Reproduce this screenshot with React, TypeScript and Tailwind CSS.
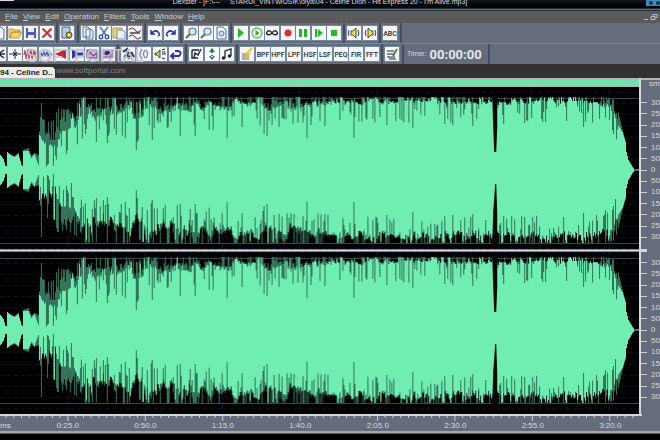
import type { ReactNode } from "react";
import { clsx } from "clsx";

type Tool = { name: string; icon: ReactNode };
type ToolGroup = { width: string; tools: Tool[] };

const ink = "#222831";
const navy = "#2a2fae";
const green = "#27b52b";

const page = <path d="M3 1h6l3 3v9H3z" fill="#eef4fc" stroke="#4f6c96" />;

const magnifier = (
  <>
    <path d="M2 12l4-4" stroke="#8a6a4a" strokeWidth="2.4" />
    <circle cx="8.5" cy="5.5" r="3.5" fill="#cfe8f6" stroke="#56799c" strokeWidth="1.2" />
  </>
);

const label = (text: string) => (
  <text x="7" y="10" textAnchor="middle" fill={ink} className="font-['Roboto',sans-serif] text-[7px] font-medium">
    {text}
  </text>
);

const speaker = (
  <>
    <path d="M4 5h2l3-3v10L6 9H4z" fill="#f0dc3a" stroke={ink} strokeWidth=".8" />
    <path d="M2 4q-1.500 3 0 6M11 4q1.500 3 0 6" stroke={navy} fill="none" />
  </>
);

const fileTools: ToolGroup[] = [
  {
    width: "w-[68px] -ml-[10px]",
    tools: [
      { name: "New", icon: page },
      {
        name: "Open",
        icon: <path d="M1 3h4l1 1h6v2H4l-2 6H1zM4 6h9.500L11 12H2z" fill="#f5d565" stroke="#b48a2c" strokeWidth=".8" />,
      },
      {
        name: "Save",
        icon: (
          <>
            <path d="M2 2h10v10H2z" fill="#5658b8" />
            <path d="M4 2h6v4H4zM4 9h6v3H4z" fill="#e8eafa" />
          </>
        ),
      },
      { name: "Close", icon: <path d="M2.500 2.500l9 9M11.500 2.500l-9 9" stroke="#c9303d" strokeWidth="2" /> },
    ],
  },
  {
    width: "w-[21px]",
    tools: [
      {
        name: "Properties",
        icon: (
          <>
            <path d="M2 1h8v11H2z" fill="#b9cbe2" stroke="#48618a" />
            <circle cx="9" cy="9" r="3" fill="#c8b032" stroke="#4d4a2a" />
            <circle cx="9" cy="9" r="1" fill="#fff" />
          </>
        ),
      },
    ],
  },
  {
    width: "w-[67px]",
    tools: [
      {
        name: "Copy",
        icon: <path d="M2 1h5l2 2v8H2zM5 3h5l2 2v8H5z" fill="#edf3fb" stroke="#47648f" strokeWidth=".9" />,
      },
      {
        name: "Cut",
        icon: (
          <>
            <path d="M3 1l6 8M11 1L5 9" stroke="#4677ad" strokeWidth="1.5" />
            <circle cx="4" cy="11" r="1.8" fill="none" stroke="#234a91" strokeWidth="1.3" />
            <circle cx="10" cy="11" r="1.8" fill="none" stroke="#234a91" strokeWidth="1.3" />
          </>
        ),
      },
      {
        name: "Paste",
        icon: (
          <>
            <path d="M1 2h9v10H1z" fill="#edd376" stroke="#a4883d" strokeWidth=".8" />
            <path d="M5 4h5l3 2v7H5z" fill="#e7f0fb" stroke="#5a799f" strokeWidth=".8" />
          </>
        ),
      },
      {
        name: "Mix paste",
        icon: (
          <>
            <path d="M1 4q3-4 6 0t6 0M1 11q3-4 6 0t6 0" fill="none" stroke="#973d3d" strokeWidth="1.2" />
            <path d="M2 7h10" stroke={ink} strokeWidth="1.3" />
          </>
        ),
      },
    ],
  },
  {
    width: "w-[36px]",
    tools: [
      { name: "Undo", icon: <path d="M3 4v4h4M3 8q4-5 7-2t0 4" fill="none" stroke={navy} strokeWidth="1.5" /> },
      { name: "Redo", icon: <path d="M11 4v4H7M11 8Q7 3 4 6t0 4" fill="none" stroke={navy} strokeWidth="1.5" /> },
    ],
  },
  {
    width: "w-[50px]",
    tools: [
      { name: "Zoom in", icon: magnifier },
      { name: "Zoom out", icon: magnifier },
      {
        name: "Zoom page",
        icon: (
          <>
            {page}
            <circle cx="7.500" cy="7.500" r="2.500" fill="#c3ddf5" stroke="#56799c" />
          </>
        ),
      },
    ],
  },
  {
    width: "w-[113px]",
    tools: [
      { name: "Play", icon: <path d="M4 2l6 5-6 5z" fill={green} /> },
      {
        name: "Play all",
        icon: (
          <>
            <circle cx="7" cy="7" r="5" fill="none" stroke="#59c45b" strokeWidth="1.3" />
            <path d="M5.500 4l4 3-4 3z" fill={green} />
          </>
        ),
      },
      {
        name: "Loop",
        icon: (
          <path d="M7 7Q4.500 3.500 2.500 5.500t0 3T7 7q2.500-3.500 4.500-1.500t0 3T7 7z" fill="none" stroke={ink} strokeWidth="1.4" />
        ),
      },
      { name: "Record", icon: <circle cx="7" cy="7" r="3.5" fill="#e02c2c" /> },
      { name: "Pause", icon: <path d="M3 3h3v8H3zM8 3h3v8H8z" fill={green} /> },
      { name: "Play from cursor", icon: <path d="M3 3h2v8H3zM6 3l5 4-5 4z" fill={green} /> },
      { name: "Stop", icon: <path d="M4 4h6v6H4z" fill={green} /> },
    ],
  },
  {
    width: "w-[36px]",
    tools: [
      { name: "Volume left", icon: speaker },
      { name: "Volume right", icon: <g transform="matrix(-1 0 0 1 14 0)">{speaker}</g> },
    ],
  },
  { width: "w-[21px]", tools: [{ name: "Text to speech", icon: label("ABC") }] },
];

const effectTools: ToolGroup[] = [
  {
    width: "w-[129px] -ml-[10px]",
    tools: [
      { name: "Trim", icon: <path d="M1 3l11 8M1 11l11-8M8 7h5" stroke={ink} strokeWidth="1.5" /> },
      { name: "Silence", icon: <path d="M7 2v10M1 7h12M5 5l2 2-2 2M9 5L7 7l2 2" fill="none" stroke={ink} /> },
      {
        name: "Amplify",
        icon: <path d="M1 8l1-5 1 9 2-10 1 10 2-10 1 10 2-9 1 6 1-5" fill="none" stroke="#d2474f" strokeWidth="1.2" />,
      },
      { name: "Normalize", icon: <path d="M1 8l1-2 1 3 2-4 1 4 2-4 1 4 2-3 2 2M1 7h12" fill="none" stroke="#4a58c8" strokeWidth="1.2" /> },
      { name: "Fade in", icon: <path d="M1 7l11-5v10z" fill="#bb2a3c" /> },
      { name: "Fade out", icon: <path d="M2 2v10l5-3.500h6v-3H7z" fill="#2c37b4" /> },
      {
        name: "Envelope",
        icon: (
          <>
            <path d="M2 3h10v8H2z" fill="#c9b9e8" stroke="#513c93" />
            <path d="M2 9l3-4 3 4 4-3" fill="none" stroke="#b02e55" strokeWidth="1.2" />
          </>
        ),
      },
      {
        name: "Compressor",
        icon: (
          <>
            <path d="M2 3h10v8H2z" fill="#b594dc" stroke="#a99cc9" />
            <circle cx="7" cy="7" r="3.2" fill="#4c1a8c" />
          </>
        ),
      },
    ],
  },
  {
    width: "w-[68px]",
    tools: [
      { name: "Reverb", icon: <path d="M2 5l4-3v4h5M3 10l3-3 2 4 3-5 2 4" fill="none" stroke="#20285e" strokeWidth="1.8" /> },
      { name: "Chorus", icon: <path d="M5 2q-4 5 0 10M8 3q-3 4 0 8M9 3q3 4 0 8" fill="none" stroke="#7b80d4" strokeWidth="1.3" /> },
      {
        name: "Echo",
        icon: (
          <>
            <path d="M2 6h2l3-3v8L4 8H2z" fill="#cfd04a" stroke={ink} strokeWidth=".8" />
            <path d="M9 3l3-1M9 7h4M9 11l3 1M9 5l3 0" stroke={ink} />
          </>
        ),
      },
      { name: "Reverse", icon: <path d="M5 6L2 9l3 3M2 9h8q4-4-1-5H6" fill="none" stroke={navy} strokeWidth="1.8" /> },
    ],
  },
  {
    width: "w-[51px]",
    tools: [
      { name: "Stretch", icon: <path d="M3 3h7M3 3v8h6M5 11l1-5 3 2 3-6" fill="none" stroke={ink} strokeWidth="1.4" /> },
      { name: "Pitch", icon: <path d="M7 1l3 4H4zM7 13l3-4H4zM6 4h2v2H6zM6 8h2v2H6z" fill="#21824b" /> },
      {
        name: "Notes",
        icon: (
          <>
            <path d="M5 11V4l6-2v7" fill="none" stroke={ink} strokeWidth="1.3" />
            <circle cx="3.500" cy="11" r="1.8" fill={ink} />
            <circle cx="9.500" cy="9" r="1.8" fill={ink} />
          </>
        ),
      },
    ],
  },
  {
    width: "w-[145px]",
    tools: [
      {
        name: "Noise filter",
        icon: (
          <>
            <path d="M2 6h7v7H2z" fill="#a7a3e0" />
            <path d="M12 1L6 7l3 0-4 5" fill="none" stroke="#e4c92f" strokeWidth="2" />
          </>
        ),
      },
      ...["BPF", "HPF", "LPF", "HSF", "LSF", "PEQ", "FIR", "FFT"].map((text) => ({ name: text, icon: label(text) })),
    ],
  },
  {
    width: "w-[21px]",
    tools: [
      {
        name: "Edit tags",
        icon: (
          <>
            <path d="M2 4h7M2 7h7M2 10h8M4 12h7" stroke={ink} strokeWidth="1.2" />
            <path d="M12 2L8 9" stroke="#5f7d3b" strokeWidth="2" />
          </>
        ),
      },
    ],
  },
];

const menus = ["File", "View", "Edit", "Operation", "Filters", "Tools", "Window", "Help"];
const times = ["0:25.0", "0:50.0", "1:15.0", "1:40.0", "2:05.0", "2:30.0", "2:55.0", "3:20.0"];
const samples = ["30000", "25000", "20000", "15000", "10000", "5000", "0", "5000", "10000", "15000", "20000", "25000", "30000"];

// [x, peak amplitude, body amplitude]
const envelope = [
  [0, 15, 15], [3, 11, 11], [5, 4, 4], [6, 4, 4], [7, 18, 18], [10, 16, 15], [14, 14, 13], [18, 17, 16],
  [21, 6, 5], [22, 4, 4], [23, 20, 19], [28, 22, 19], [31, 14, 12], [34, 17, 16], [38, 15, 5], [39, 54, 34],
  [41, 52, 28], [47, 48, 20], [54, 50, 24], [57, 62, 32], [66, 60, 28], [76, 66, 38], [82, 73, 50],
  [100, 72, 50], [128, 73, 54], [137, 68, 44], [144, 73, 54], [180, 73, 54], [210, 73, 58], [255, 73, 66],
  [270, 73, 56], [310, 73, 60], [345, 73, 67], [440, 73, 65], [480, 73, 68], [520, 73, 65], [560, 73, 68],
  [590, 73, 67], [602, 73, 60], [610, 72, 54], [615, 70, 50], [618, 62, 46], [623, 40, 38], [626, 30, 28],
  [627, 18, 18], [629, 10, 10], [632, 5, 5], [635, 0, 0], [640, 0, 0],
];

const dips = [
  [47, 5], [48, 6], [53, 4], [66, 16], [67, 20], [96, 28], [107, 27], [108, 34], [125, 32], [136, 20], [137, 28],
  [152, 30], [180, 34], [195, 34], [227, 32], [242, 43], [264, 36], [267, 34], [307, 32], [325, 44], [354, 32],
  [387, 45], [413, 42], [445, 46], [453, 45], [473, 44], [504, 46], [525, 47], [584, 43], [613, 40], [614, 36],
];

function sampleEnvelope(x: number) {
  const i = Math.max(1, envelope.findIndex((point) => point[0] >= x));
  const [x0, p0, b0] = envelope[i - 1];
  const [x1, p1, b1] = envelope[i];
  const t = (x - x0) / (x1 - x0);
  return [p0 + (p1 - p0) * t, b0 + (b1 - b0) * t];
}

function buildWave(center: number, seed: number) {
  let state = seed;
  const random = () => {
    state = (state * 1664525 + 1013904223) % 4294967296;
    return state / 4294967296;
  };

  let shade = "";
  let body = "";
  // swell drifts slowly so that quiet and loud bars come in clumps
  let swell = 0.5;
  let target = 0.5;

  for (let x = 0; x < 635; x++) {
    const [peak, base] = sampleEnvelope(x);
    const loud = x > 38 && x < 619;
    const dip = dips.find((d) => d[0] === x);
    if (x % 4 === 0) target = random();
    swell += (target - swell) * 0.5;

    const side = (drop: number, lift: number) => {
      if (!loud) return [peak, base];
      const room = Math.max(peak - base, 10);
      const spike = random() < 0.3;
      const outer = x === 41 ? 67 : spike ? peak : peak - (swell * 0.6 + random() * 0.4) * drop * room;
      let inner = base + lift - 4 + (1 - swell) * 12 + random() * 4;
      const roll = random();
      if (roll < 0.18) inner = outer - random() * 4;
      else if (roll < 0.4) inner = base + lift - 4 - random() * 16;
      if (dip) inner = dip[1];
      return [outer, Math.min(inner, outer)];
    };

    const [topOuter, topInner] = side(0.9, 1);
    const [bottomOuter, bottomInner] = side(1.5, -1);
    shade += `M${x} ${(center - topOuter).toFixed(1)}h1V${(center + bottomOuter).toFixed(1)}h-1z`;
    body += `M${x} ${(center - topInner).toFixed(1)}h1V${(center + bottomInner).toFixed(1)}h-1z`;
  }
  return { shade, body };
}

function Channel({ center, seed }: { center: number; seed: number }) {
  const { shade, body } = buildWave(center, seed);
  const rows = Array.from({ length: 15 }, (_, i) => Math.round(center + (i - 7) * 11.2));

  return (
    <svg viewBox="0 0 640 162" preserveAspectRatio="none" className="min-h-0 w-full flex-1 basis-40 bg-black">
      {rows.map((y) => (
        <path key={y} d={`M0 ${y}.5H640`} stroke="#0d1322" strokeDasharray="4 3" />
      ))}
      {times.map((time, i) => (
        <path key={time} d={`M${68 + i * 77.4} 0V162`} stroke="#0a1526" />
      ))}
      <path d={`M0 ${center - 71.5}H640M0 ${center + 73.5}H640`} stroke="#3e4450" />
      <path d={shade} fill="#33745a" />
      <path d={body} fill="#70edb1" />
      <path d={`M632 ${center}H640`} stroke="#70edb1" />
      {/* the short break before the last verse */}
      <path
        d={`M493 ${center - 74}h5v32l-1 24h-2l-1-24zM493 ${center + 74}h5v-32l-1-28h-1l-2 28z`}
        fill="#020805"
      />
    </svg>
  );
}

function AmplitudeScale({ className }: { className: string }) {
  return (
    <div className={clsx("flex min-h-0 flex-1 basis-40 flex-col", className)}>
      {samples.map((sample, i) => (
        <div key={i} className="flex min-h-0 flex-1 items-center gap-1">
          <span className="h-px w-[6px] shrink-0 bg-[#c9ced8]" />
          <span className="leading-none">{sample}</span>
        </div>
      ))}
    </div>
  );
}

function ToolGroups({ groups }: { groups: ToolGroup[] }) {
  return groups.map((group, i) => (
    <div
      key={i}
      className={clsx("flex shrink-0 items-center justify-between border-r-2 border-[#464f61] px-[2px]", group.width)}
    >
      {group.tools.map((tool) => (
        <button
          key={tool.name}
          type="button"
          aria-label={tool.name}
          className="h-[14px] w-[14px] shrink-0 bg-[#f4f6f8] outline outline-[#71869f] hover:bg-white"
        >
          <svg viewBox="0 0 14 14" fill="none" className="h-full w-full">
            {tool.icon}
          </svg>
        </button>
      ))}
    </div>
  ));
}

export default function App() {
  return (
    <div className="flex min-h-screen flex-col overflow-hidden bg-black font-['Liberation_Sans',Arial,sans-serif] text-[8px] text-[#d6dae0]">
      <header className="flex h-2 shrink-0 justify-between overflow-hidden bg-gradient-to-b from-[#171b20] to-black">
        <span className="h-px w-[14px] bg-[#d9dde0]" />
        <h1 className="-mt-[2px] pr-5 text-[7px] leading-[8px] whitespace-pre">
          {"Dexster - [F:\\---     STARUI_VINT\\MUSIK\\olya\\04 - Celine Dion - Hit Express 20 - I'm Alive.mp3]"}
        </h1>
        <span className="flex h-[6px] w-[14px] items-center gap-[3px] bg-[#3d8db8] pl-[3px]">
          <span className="h-1 w-1 rounded-full bg-[#12364f]" />
          <span className="h-1 w-1 rounded-full bg-[#12364f]" />
        </span>
      </header>
      <div className="h-[3px] shrink-0 border-y border-[#20303d] bg-[#4c7288]" />

      <nav className="flex h-3 shrink-0 items-center gap-[5px] bg-[#5b5b5b] pl-[5px] text-[#c3d0d6]">
        {menus.map((menu) => (
          <button key={menu} type="button" className="leading-none">
            <span className="underline">{menu[0]}</span>
            {menu.slice(1)}
          </button>
        ))}
        <svg viewBox="0 0 17 8" className="ml-auto h-2 w-[17px]" fill="none" stroke="#a9c6d2">
          <path d="M1 6.500h4M8 3.500h4v3H8zM10 3V1.500h4v3h-2M17 1.500l-1 1" />
        </svg>
      </nav>

      <div className="relative shrink-0">
        <div className="flex h-[21px] items-stretch border-b border-[#7b8493] bg-[#656d7c]">
          <ToolGroups groups={fileTools} />
        </div>
        <div className="flex h-5 items-stretch bg-[#656d7c]">
          <ToolGroups groups={effectTools} />
          <div className="flex w-[86px] items-center gap-[3px] border-r-2 border-[#464f61] pl-[3px]">
            <span className="text-[7px]">Timer:</span>
            <time className="font-['Roboto',sans-serif] text-[13px] leading-none font-bold text-[#e3e6ea]">00:00:00</time>
          </div>
        </div>
        <div className="flex h-[14px] items-end bg-[#323232]">
          <button type="button" className="h-[11px] w-[55px] overflow-hidden rounded-tr-sm bg-[#ececec] text-left leading-[12px] font-bold whitespace-nowrap text-[#222]">
            94 - Celine D..
          </button>
        </div>
        <div className="pointer-events-none absolute top-[25px] left-[26px] text-[18px] leading-4 text-white/60 text-shadow-[0_0_1px_#656d7c]">
          SOFTPORTAL
        </div>
        <div className="pointer-events-none absolute top-[43px] left-[56px] leading-[10px] text-[#858585]">www.softportal.com</div>
      </div>

      <main className="flex min-h-0 flex-1">
        <section className="flex min-w-0 flex-1 flex-col border-r-2 border-[#d5d7db]">
          <div className="h-[9px] shrink-0 border-t-2 border-b border-[#b5b8bb] bg-[#6fe3ab]" />
          <Channel center={83} seed={41} />
          <div className="h-[3px] shrink-0 border-y border-[#777a80] bg-[#e4e5ea]" />
          <Channel center={78} seed={41} />
        </section>
        <aside className="flex w-[19px] shrink-0 flex-col overflow-hidden bg-[#656d7c]">
          <div className="h-[9px] shrink-0 border-t-2 border-[#b5b8bb] pl-2 leading-[8px]">smp</div>
          <AmplitudeScale className="pt-[10px] pb-[6px]" />
          <div className="h-[3px] w-[6px] shrink-0 bg-[#d5d7db]" />
          <AmplitudeScale className="pt-[5px] pb-[11px]" />
        </aside>
      </main>

      <footer className="shrink-0 bg-[#656d7c]">
        <div className="mr-[18px] h-[2px] bg-[#d5d7db]" />
        <svg viewBox="0 0 660 5" preserveAspectRatio="none" className="h-[5px] w-full" stroke="#c9ced8">
          {Array.from({ length: 82 }, (_, i) => (
            <path key={i} d={`M${6 + i * 7.74} 0v${i % 10 === 8 ? 5 : 2}`} />
          ))}
        </svg>
        <div className="flex h-[10px] items-center leading-none">
          <span className="w-[29px] shrink-0">ms</span>
          {times.map((time) => (
            <span key={time} className="flex-1 text-center">
              {time}
            </span>
          ))}
          <span className="w-[11px] shrink-0" />
        </div>
        <div className="h-[3px] border-b border-[#55585c] bg-[#a3a5a7]" />
        <div className="h-[6px] bg-black" />
      </footer>
    </div>
  );
}
